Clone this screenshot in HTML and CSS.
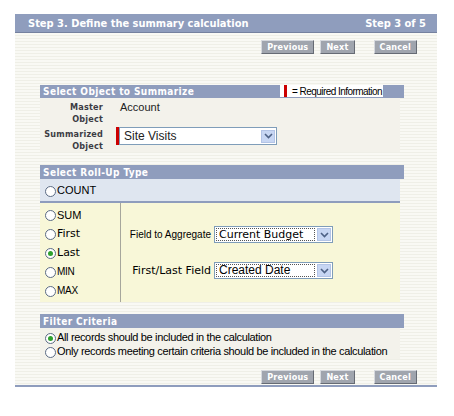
FILE: index.html
```html
<!DOCTYPE html>
<html>
<head>
    <title>Define the summary calculation</title>
    <link rel="stylesheet" href="styles.css">
</head>
<body>
    <div class="wizard">
        <div class="wizard-title">
            <span>Step 3. Define the summary calculation</span>
            <span>Step 3 of 5</span>
        </div>
        <div class="wizard-body">
            <div class="buttons">
                <button class="btn">Previous</button>
                <button class="btn">Next</button>
                <button class="btn cancel">Cancel</button>
            </div>

            <div class="section">
                <div class="section-head">
                    <span>Select Object to Summarize</span>
                    <span class="req-legend"><i class="req-bar"></i>= Required Information</span>
                </div>
                <div class="section-body object-body">
                    <div class="field-row">
                        <div class="label">Master<br>Object</div>
                        <div class="value">Account</div>
                    </div>
                    <div class="field-row">
                        <div class="label">Summarized<br>Object</div>
                        <div class="value">
                            <i class="req-bar tall"></i>
                            <div class="select wide">
                                <span class="select-text">Site Visits</span>
                                <span class="select-arrow"><svg width="9" height="6" viewBox="0 0 9 6"><path d="M1 1l3.5 3.5L8 1" fill="none" stroke="#4d6185" stroke-width="1.6"/></svg></span>
                            </div>
                        </div>
                    </div>
                </div>
            </div>

            <div class="section rollup">
                <div class="section-head"><span>Select Roll-Up Type</span></div>
                <div class="count-row">
                    <label class="opt"><span class="radio"></span>COUNT</label>
                </div>
                <div class="rollup-body">
                    <div class="rollup-types">
                        <label class="opt"><span class="radio"></span>SUM</label>
                        <label class="opt dv"><span class="radio"></span>First</label>
                        <label class="opt dv"><span class="radio checked"></span>Last</label>
                        <label class="opt small"><span class="radio"></span>MIN</label>
                        <label class="opt small"><span class="radio"></span>MAX</label>
                    </div>
                    <div class="rollup-fields">
                        <div class="pick-row">
                            <span class="pick-label">Field to Aggregate</span>
                            <div class="select focus">
                                <span class="select-text dv">Current Budget</span>
                                <span class="select-arrow"><svg width="9" height="6" viewBox="0 0 9 6"><path d="M1 1l3.5 3.5L8 1" fill="none" stroke="#4d6185" stroke-width="1.6"/></svg></span>
                            </div>
                        </div>
                        <div class="pick-row">
                            <span class="pick-label dv">First/Last Field</span>
                            <div class="select focus">
                                <span class="select-text">Created Date</span>
                                <span class="select-arrow"><svg width="9" height="6" viewBox="0 0 9 6"><path d="M1 1l3.5 3.5L8 1" fill="none" stroke="#4d6185" stroke-width="1.6"/></svg></span>
                            </div>
                        </div>
                    </div>
                </div>
            </div>

            <div class="section filter">
                <div class="section-head"><span>Filter Criteria</span></div>
                <div class="section-body filter-body">
                    <label class="opt"><span class="radio checked"></span>All records should be included in the calculation</label>
                    <label class="opt"><span class="radio"></span>Only records meeting certain criteria should be included in the calculation</label>
                </div>
            </div>

            <div class="buttons bottom">
                <button class="btn">Previous</button>
                <button class="btn">Next</button>
                <button class="btn cancel">Cancel</button>
            </div>
        </div>
    </div>
</body>
</html>
```

FILE: styles.css
```css
body {
    margin: 0;
    background-color: #fff;
    font-family: "Liberation Sans", Arial, sans-serif;
    font-size: 11px;
    color: #000;
}

.wizard {
    width: 422px;
    margin: 14px 0 0 15px;
}

.wizard-title {
    display: flex;
    justify-content: space-between;
    align-items: center;
    height: 18px;
    padding: 0 11px 0 13px;
    background-color: #8f9dbd;
    border-bottom: 1px solid #75819f;
    color: #fff;
    font-family: "DejaVu Sans Condensed", "DejaVu Sans", sans-serif;
    font-weight: bold;
    font-size: 11px;
}

.wizard-body {
    padding: 7px 0 1px;
    background: repeating-linear-gradient(to bottom, #f9f9f4 0, #f9f9f4 2px, #efefe7 2px, #efefe7 3px);
    border-bottom: 2px solid #8f9dbd;
}

.buttons {
    display: flex;
    justify-content: flex-end;
    padding-right: 20px;
}

.buttons.bottom {
    margin-top: 11px;
}

.btn {
    height: 14px;
    margin: 0 0 0 6px;
    padding: 0 5px;
    background-color: #a0a5ae;
    border: 1px solid;
    border-color: #d6d9de #666b74 #666b74 #d6d9de;
    color: #fff;
    font-family: "DejaVu Sans Condensed", "DejaVu Sans", sans-serif;
    font-weight: bold;
    font-size: 9px;
    line-height: 12px;
    letter-spacing: 0.2px;
    cursor: pointer;
}

.btn.cancel {
    margin-left: 19px;
}

.section {
    width: 364px;
    margin: 31px 0 0 25px;
}

.section.rollup {
    margin-top: 13px;
}

.section.filter {
    margin-top: 12px;
}

.section-head {
    display: flex;
    justify-content: space-between;
    align-items: center;
    height: 13px;
    padding-left: 3px;
    background-color: #8f9dbd;
    color: #fff;
    font-family: "DejaVu Sans Condensed", "DejaVu Sans", sans-serif;
    font-weight: bold;
    font-size: 10px;
    letter-spacing: 0.4px;
    white-space: nowrap;
}

.rollup .section-head,
.filter .section-head {
    height: 14px;
}

.req-legend {
    display: flex;
    align-items: center;
    height: 12px;
    padding-right: 1px;
    margin: -1px 21px 0 0;
    background-color: #fff;
    color: #000;
    font-family: "Liberation Sans", Arial, sans-serif;
    font-weight: normal;
    font-size: 10px;
    letter-spacing: -0.55px;
    white-space: nowrap;
}

.req-bar {
    display: inline-block;
    flex: none;
    width: 3px;
    height: 12px;
    margin: 0 5px 0 4px;
    background-color: #c00;
}

.req-bar.tall {
    height: 18px;
    margin: 0;
}

.section-body {
    width: 360px;
    background-color: #f3f2eb;
}

.object-body {
    padding-top: 3px;
}

.field-row {
    display: flex;
    margin-bottom: 3px;
}

.field-row:last-child {
    margin-bottom: 0;
}

.label {
    width: 63px;
    text-align: right;
    color: #3c3c44;
    font-family: "DejaVu Sans Condensed", "DejaVu Sans", sans-serif;
    font-weight: bold;
    font-size: 9px;
    line-height: 12px;
    letter-spacing: 0.2px;
}

.value {
    display: flex;
    align-items: flex-start;
    margin-left: 13px;
    padding-left: 4px;
    line-height: 12px;
    color: #222;
}

.field-row:last-child .value {
    padding-left: 0;
    margin-top: -1px;
}

.select {
    display: flex;
    align-items: center;
    box-sizing: border-box;
    width: 119px;
    height: 17px;
    padding: 1px;
    background-color: #fff;
    border: 1px solid #7f9db9;
    font-size: 12px;
}

.select.wide {
    width: 158px;
    height: 18px;
}

.select-text {
    flex: 1;
    padding-left: 3px;
    white-space: nowrap;
    overflow: hidden;
}

.select.focus .select-text {
    border: 1px dotted #555;
    line-height: 11px;
    padding-left: 2px;
}

.select-text.dv {
    font-family: "DejaVu Sans", sans-serif;
    font-size: 11px;
}

.select-arrow {
    display: flex;
    align-items: center;
    justify-content: center;
    width: 14px;
    height: 13px;
    margin-left: 2px;
    background-color: #c7d6f3;
    border: 1px solid #b3c4e6;
    box-sizing: border-box;
}

.opt {
    display: flex;
    align-items: center;
    height: 14px;
    padding-left: 5px;
    font-size: 11px;
    white-space: nowrap;
}

.radio {
    display: inline-block;
    flex: none;
    box-sizing: border-box;
    width: 11px;
    height: 11px;
    margin: 2px 1px 0 0;
    border: 1px solid #5b6b84;
    border-radius: 50%;
    background-color: #fff;
    position: relative;
}

.radio.checked::after {
    content: "";
    position: absolute;
    left: 2px;
    top: 2px;
    width: 5px;
    height: 5px;
    border-radius: 50%;
    background-color: #2ea12e;
}

.dv {
    font-family: "DejaVu Sans", sans-serif;
}

.opt.small {
    font-size: 10px;
    letter-spacing: -0.3px;
}

.count-row {
    display: flex;
    align-items: center;
    width: 360px;
    height: 22px;
    background-color: #dfe6f0;
    border-bottom: 2px solid #8f9dbd;
}

.rollup-body {
    display: flex;
    width: 360px;
    height: 99px;
    background-color: #f8f7d8;
}

.rollup-types {
    width: 80px;
    padding-top: 2px;
    border-right: 1px solid #a6a69c;
}

.rollup-types .opt {
    height: 19px;
}

.rollup-fields {
    padding-top: 23px;
}

.pick-row {
    display: flex;
    align-items: center;
    margin-bottom: 19px;
}

.pick-label {
    width: 90px;
    margin-right: 3px;
    text-align: right;
    font-size: 10px;
}

.pick-label.dv {
    font-size: 11px;
}

.filter-body {
    padding: 2px 0 1px;
}

.filter-body .opt {
    letter-spacing: -0.35px;
}
```
